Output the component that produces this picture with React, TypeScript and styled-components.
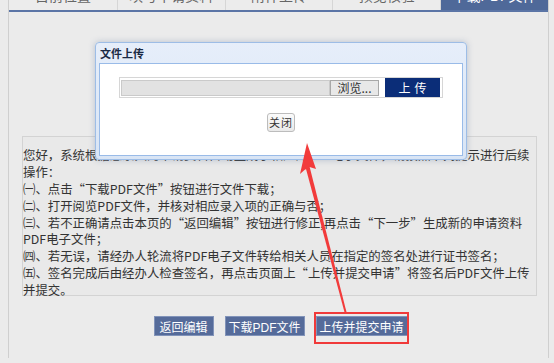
import styled, { createGlobalStyle } from 'styled-components';

const GlobalStyle = createGlobalStyle`
  html, body {
    margin: 0;
    padding: 0;
    background: #ebebeb;
    overflow: hidden;
  }
  body {
    font-family: "Liberation Sans", "Noto Sans CJK SC", sans-serif;
  }
`;

const Screen = styled.div`
  position: relative;
  width: 554px;
  height: 363px;
  overflow: hidden;
`;

const Page = styled.div`
  margin-left: 8px;
  margin-top: -21px;
  width: 539px;
  height: 379px;
  border-left: 1px solid #cfcfcf;
  border-right: 1px solid #cfcfcf;
  display: flex;
  flex-direction: column;
`;

const TabBar = styled.div`
  display: grid;
  grid-template-columns: repeat(5, 1fr);
  height: 31px;
  border-bottom: 2px solid #5b75a6;
`;

const Tab = styled.div<{ $active?: boolean }>`
  display: flex;
  align-items: center;
  justify-content: center;
  font-size: 14px;
  color: ${({ $active }) => ($active ? '#ffffff' : '#666666')};
  background: ${({ $active }) => ($active ? '#4f6999' : '#ececec')};
  border-left: 1px solid #d6d6d6;
  &:first-child {
    border-left: none;
  }
`;

const Content = styled.div`
  display: flex;
  flex-direction: column;
  padding: 124px 11px 0 13px;
`;

const Notice = styled.div`
  height: 148px;
  padding-top: 10px;
  border: 1px solid #d3d3d3;
  background: #e9e9e9;
  font-size: 12.4px;
  line-height: 16.9px;
  color: #333333;
  font-family: "Noto Sans CJK SC", "Liberation Sans", sans-serif;
`;

const Line = styled.div`
  height: 16.9px;
  white-space: nowrap;
`;

const Actions = styled.div`
  display: flex;
  justify-content: center;
  gap: 11px;
  margin-top: 20px;
  padding-left: 2px;
`;

const ActionButton = styled.button<{ $width: number }>`
  width: ${({ $width }) => $width}px;
  height: 20px;
  padding: 0;
  border: 1px solid #8193b9;
  background: #556b9a;
  color: #ffffff;
  font-size: 12px;
  font-family: "Liberation Sans", "Noto Sans CJK SC", sans-serif;
`;

const Highlight = styled.div`
  position: relative;
  display: flex;
  &::after {
    content: '';
    position: absolute;
    left: -2px;
    top: -4px;
    right: -1px;
    bottom: -8px;
    border: 2px solid #f03a3a;
    pointer-events: none;
  }
`;

const Dialog = styled.div`
  position: absolute;
  left: 95px;
  top: 42px;
  width: 364px;
  height: 113px;
  border: 1px solid #9dbde6;
  border-radius: 4px;
  background: linear-gradient(#e6eefa, #d9e5f5);
  box-shadow: 0 0 6px rgba(120, 140, 170, 0.45);
  display: flex;
  flex-direction: column;
  padding: 0 3px 3px;
`;

const DialogTitle = styled.div`
  height: 20px;
  display: flex;
  align-items: center;
  padding-left: 1px;
  font-size: 11px;
  font-weight: bold;
  color: #1b2a44;
  font-family: "Noto Sans CJK SC", sans-serif;
`;

const DialogBody = styled.div`
  flex: 1;
  background: #ffffff;
  border: 1px solid #99bbe8;
  display: flex;
  flex-direction: column;
  align-items: center;
  padding-top: 13px;
`;

const FileRow = styled.div`
  width: 319px;
  height: 19px;
  border: 1px solid #d6d6d6;
  display: flex;
  align-items: center;
  padding: 0 2px 0 1px;
`;

const FileField = styled.div`
  flex: 1;
  height: 14px;
  background: #e2e2e2;
  border: 1px solid #cacaca;
`;

const Browse = styled.div`
  width: 47px;
  height: 14px;
  border: 1px solid #a8a8a8;
  background: #e8e8e8;
  font-size: 12px;
  line-height: 14px;
  text-align: center;
  color: #333;
  font-family: "Noto Sans CJK SC", sans-serif;
`;

const UploadButton = styled.div`
  width: 55px;
  height: 19px;
  margin-left: 6px;
  background: #0b2d78;
  color: #ffffff;
  font-size: 12px;
  line-height: 19px;
  text-align: center;
  letter-spacing: 4px;
  text-indent: 4px;
  font-family: "Noto Sans CJK SC", sans-serif;
`;

const CloseButton = styled.div`
  margin-top: 15px;
  width: 26px;
  height: 17px;
  border: 1px solid #bcbcbc;
  border-radius: 3px;
  background: linear-gradient(#fbfbfb, #e9e9e9);
  font-size: 11px;
  line-height: 17px;
  text-align: center;
  color: #333;
  letter-spacing: 1px;
  font-family: "Noto Sans CJK SC", sans-serif;
`;

const Arrow = styled.svg`
  position: absolute;
  left: 0;
  top: 0;
  pointer-events: none;
`;

const tabs = ['目前位置', '填写申请资料', '附件上传', '预览核验', '下载PDF文件'];

const notice = [
  '您好，系统根据您录入的申请资料自动生成了相应的PDF电子文件，请按照下列提示进行后续',
  '操作：',
  '㈠、点击“下载PDF文件”按钮进行文件下载；',
  '㈡、打开阅览PDF文件，并核对相应录入项的正确与否；',
  '㈢、若不正确请点击本页的“返回编辑”按钮进行修正,再点击“下一步”生成新的申请资料',
  'PDF电子文件；',
  '㈣、若无误，请经办人轮流将PDF电子文件转给相关人员在指定的签名处进行证书签名；',
  '㈤、签名完成后由经办人检查签名，再点击页面上“上传并提交申请”将签名后PDF文件上传',
  '并提交。',
];

export default function App() {
  return (
    <Screen>
      <GlobalStyle />
      <Page>
        <TabBar>
          {tabs.map((t, i) => (
            <Tab key={t} $active={i === tabs.length - 1}>
              {t}
            </Tab>
          ))}
        </TabBar>
        <Content>
          <Notice>
            {notice.map((l) => (
              <Line key={l}>{l}</Line>
            ))}
          </Notice>
          <Actions>
            <ActionButton $width={60}>返回编辑</ActionButton>
            <ActionButton $width={80}>下载PDF文件</ActionButton>
            <Highlight>
              <ActionButton $width={92}>上传并提交申请</ActionButton>
            </Highlight>
          </Actions>
        </Content>
      </Page>

      <Dialog>
        <DialogTitle>文件上传</DialogTitle>
        <DialogBody>
          <FileRow>
            <FileField />
            <Browse>浏览...</Browse>
            <UploadButton>上传</UploadButton>
          </FileRow>
          <CloseButton>关闭</CloseButton>
        </DialogBody>
      </Dialog>

      <Arrow width="554" height="363" viewBox="0 0 554 363">
        <polygon points="305.2,166 309.4,166 347,314 345,314" fill="#f23b3b" />
        <polygon points="307,143 316,169 309.5,167 304.5,170 300,174" fill="#f23b3b" />
      </Arrow>
    </Screen>
  );
}
